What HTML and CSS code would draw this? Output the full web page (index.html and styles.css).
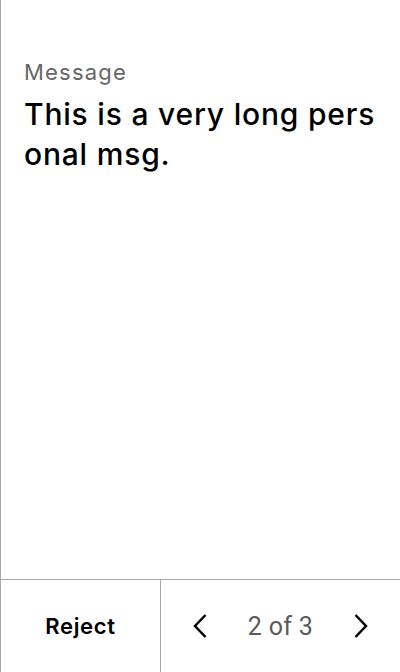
FILE: index.html
```html
<!DOCTYPE html>
<html>
<head>
<meta charset="utf-8">
<link rel="stylesheet" href="styles.css">
</head>
<body>
<div class="screen">
  <div class="content">
    <div class="label">Message</div>
    <div class="message">This is a very long personal msg.</div>
  </div>
  <div class="footer">
    <button class="reject">Reject</button>
    <div class="pager">
      <button class="nav" aria-label="Previous">
        <svg width="16" height="26" viewBox="0 0 16 26"><path d="M13.5 2 L3 13 L13.5 24" fill="none" stroke="#000" stroke-width="2.5"/></svg>
      </button>
      <span class="count">2 of 3</span>
      <button class="nav" aria-label="Next">
        <svg width="16" height="26" viewBox="0 0 16 26"><path d="M2.5 2 L13 13 L2.5 24" fill="none" stroke="#000" stroke-width="2.5"/></svg>
      </button>
    </div>
  </div>
</div>
</body>
</html>
```
FILE: styles.css
```css
html, body {
  margin: 0;
  padding: 0;
  background: #fff;
}
.screen {
  width: 400px;
  height: 672px;
  box-sizing: border-box;
  border-left: 1px solid #a8a8a8;
  display: flex;
  flex-direction: column;
  font-family: Inter, "Noto Sans", sans-serif;
}
.content {
  flex: 1;
  padding: 58px 20px 0 23px;
}
.label {
  font-size: 22px;
  color: #666;
  line-height: 28px;
  letter-spacing: 1.2px;
}
.message {
  margin-top: 8px;
  font-size: 30px;
  font-weight: 500;
  line-height: 40px;
  color: #000;
  letter-spacing: 0.8px;
  word-break: break-all;
}
.footer {
  height: 92px;
  border-top: 1px solid #a8a8a8;
  display: flex;
}
.reject {
  width: 160px;
  border: 0;
  border-right: 1px solid #a8a8a8;
  background: none;
  font-family: Inter, sans-serif;
  font-size: 22px;
  font-weight: 600;
  letter-spacing: 0.7px;
  color: #000;
  padding: 0;
}
.pager {
  flex: 1;
  display: flex;
  align-items: center;
  justify-content: space-between;
  padding: 0 31px 0 31px;
}
.nav {
  border: 0;
  background: none;
  padding: 0;
  display: flex;
}
.count {
  font-family: Roboto, sans-serif;
  font-size: 25px;
  color: #5a5a5a;
  letter-spacing: 0.3px;
}
```
